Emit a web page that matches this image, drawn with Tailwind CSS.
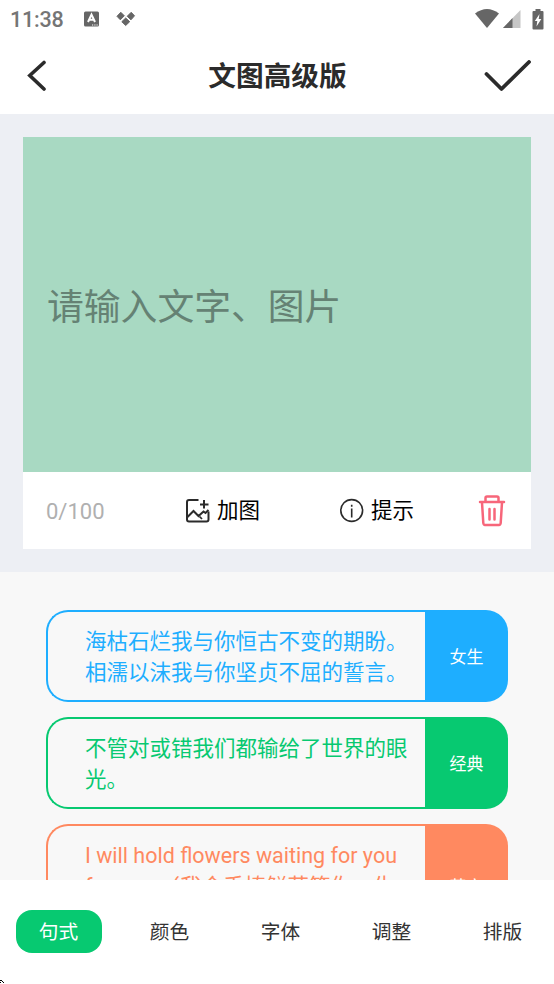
<!DOCTYPE html>
<html lang="zh-CN">
<head>
<meta charset="utf-8">
<title>文图高级版</title>
<script src="https://cdn.jsdelivr.net/npm/@tailwindcss/browser@4"></script>
</head>
<body class="bg-white">
<div class="relative flex h-[984px] w-[554px] flex-col overflow-hidden bg-white font-[Roboto,'Noto_Sans_CJK_SC',sans-serif]">
  <div class="flex h-[38px] shrink-0 items-center pl-[10px] text-[#666]">
    <span class="w-[74px] pt-[2px] text-[21.500px] leading-[38px] font-medium tracking-[-0.200px] text-[#757575]">11:38</span>
    <svg class="h-[16px] w-[15px]" viewBox="0 0 15 16"><rect y=".5" width="15" height="15" rx="1.5" fill="#666"/><path d="M4 11 7.500 3.500 11 11M5.300 8.700h4.400" fill="none" stroke="#fff" stroke-width="2"/><path d="M8 14h1.200M10.300 14h1.200M12.500 14h1.200" stroke="#fff" stroke-width="1.200"/></svg>
    <svg class="ml-[17px] h-[16px] w-[20px]" viewBox="0 0 20 16"><path d="M4.800 1.300 8.300 4.800 4.300 8.800 1 5.300ZM15.200 1.300 18.500 4.800 15 8.800 11.200 5.300ZM9.700 7 13.700 10.700 9.700 14.500 5.800 10.700Z" fill="#666" stroke="#666" stroke-width="1" stroke-linejoin="round"/></svg>
    <svg class="ml-[339px] h-[20px] w-[24px]" viewBox="0 0 24 20"><path d="M0 4.500Q12-4.500 24 4.500L12 19Z" fill="#666"/></svg>
    <svg class="ml-[4px] h-[18px] w-[18px]" viewBox="0 0 18 18"><path d="M17.500 0v18H0Z" fill="#c6c6c6"/><path d="M9.500 8v10H0Z" fill="#666"/></svg>
    <svg class="ml-[11px] h-[21px] w-[12px]" viewBox="0 0 12 21"><path d="M3.500 0h5v2H10.500Q11.500 2 11.500 3V19.500Q11.500 20.500 10.500 20.500h-9Q.5 20.500.5 19.500V3Q.5 2 1.500 2h2Z" fill="#666"/><path d="M7.500 5 2.800 12h2.500L4.500 17.500 9.300 10H6.700Z" fill="#fff"/></svg>
  </div>
  <header class="flex h-[76px] shrink-0 items-center justify-between pr-[23px] pl-[27px]">
    <svg class="h-[32px] w-[45px]" viewBox="0 0 45 32"><path d="M17 2.500 2.800 15.500 17 29" fill="none" stroke="#2b2b2b" stroke-width="3.600" stroke-linecap="round"/></svg>
    <h1 class="pt-[2px] text-[27.700px] leading-[40px] font-bold text-[#2b2b2b]">文图高级版</h1>
    <svg class="h-[32px] w-[48px]" viewBox="0 0 48 32"><path d="M3.500 14 18.500 29 46 2" fill="none" stroke="#2b2b2b" stroke-width="3.800" stroke-linecap="round" stroke-linejoin="round"/></svg>
  </header>
  <section class="h-[458px] shrink-0 bg-[#edeff4] px-[23px] pt-[23px]">
    <div class="flex h-[335px] items-center bg-[#a8d9c2] pt-[6px] pl-[24px] text-[36.800px] text-[#658274]">请输入文字、图片</div>
    <div class="flex h-[77px] items-center bg-white pl-[23px]">
      <span class="w-[139px] pt-[2px] text-[22px] text-[#b0b0b0]">0/100</span>
      <svg class="h-[26px] w-[26px]" viewBox="0 0 26 26"><g fill="none" stroke="#2b2b2b" stroke-width="2"><path d="M13.500 2H4Q2 2 2 4V21.500Q2 23.500 4 23.500H21.500Q23.500 23.500 23.500 21.500V13.500M19 2V10.500M15 6.500h8.500"/><path d="M2.500 19 8.500 13 13.500 18 18.500 13.500 20.500 15 23.500 12"/></g><path d="M14.500 18.500 17 21" fill="none" stroke="#2b2b2b" stroke-width="1.700"/></svg>
      <span class="ml-[6px] w-[122px] pt-[2px] text-[21.500px] text-black">加图</span>
      <svg class="h-[26px] w-[26px]" viewBox="0 0 26 26"><circle cx="12.700" cy="12.500" r="10.900" fill="none" stroke="#2b2b2b" stroke-width="1.600"/><path d="M12.700 10.500v9M12.700 6.700v2" stroke="#2b2b2b" stroke-width="1.600"/></svg>
      <span class="ml-[6px] w-[107px] pt-[2px] text-[21.500px] text-black">提示</span>
      <svg class="h-[32px] w-[28px]" viewBox="0 0 28 32"><g fill="none" stroke="#f7667a" stroke-width="2.500" stroke-linejoin="round" stroke-linecap="round"><path d="M2 7h24M7.500 6.500V3Q7.500 1.500 9 1.500h10Q20.500 1.500 20.500 3V6.500M4 7.500 5.300 28Q5.500 30 7 30h14Q22.500 30 22.700 28L24 7.500M11.500 14v10.500M16.500 14v10.500"/></g></svg>
    </div>
  </section>
  <main class="flex h-[308px] shrink-0 flex-col gap-[15px] overflow-hidden bg-[#f8f8f8] px-[46px] pt-[38px] text-[21.500px] leading-[31px]">
    <div class="flex h-[92px] shrink-0 text-[#1eaeff]">
      <p class="w-[379px] shrink-0 rounded-l-[22px] border-2 border-r-0 border-[#1eaeff] pt-[14px] pl-[37px] whitespace-nowrap">海枯石烂我与你恒古不变的期盼。<br>相濡以沫我与你坚贞不屈的誓言。</p>
      <div class="flex flex-1 items-center justify-center rounded-r-[22px] bg-[#1eaeff] pt-[3px] text-[17px] text-white">女生</div>
    </div>
    <div class="flex h-[92px] shrink-0 text-[#07c971]">
      <p class="w-[379px] shrink-0 rounded-l-[22px] border-2 border-r-0 border-[#07c971] pt-[14px] pl-[37px] whitespace-nowrap">不管对或错我们都输给了世界的眼<br>光。</p>
      <div class="flex flex-1 items-center justify-center rounded-r-[22px] bg-[#07c971] pt-[3px] text-[17px] text-white">经典</div>
    </div>
    <div class="flex h-[123px] shrink-0 text-[#ff8960]">
      <p class="w-[379px] shrink-0 rounded-l-[22px] border-2 border-r-0 border-[#ff8960] pt-[14px] pl-[37px] whitespace-nowrap">I will hold flowers waiting for you<br>forever.<span class="ml-[2px]">（我会手捧鲜花等你一生</span><br>一世）</p>
      <div class="flex flex-1 items-center justify-center rounded-r-[22px] bg-[#ff8960] pt-[3px] text-[17px] text-white">英文</div>
    </div>
  </main>
  <nav class="grid h-[104px] shrink-0 grid-cols-[repeat(5,111px)] justify-items-center pt-[30px] pl-[3px] text-[19.700px] text-[#333]">
    <span class="flex h-[43px] w-[86px] items-center justify-center rounded-[16px] bg-[#07c971] pt-[3px] text-white">句式</span>
    <span class="flex h-[43px] items-center pt-[3px]">颜色</span>
    <span class="flex h-[43px] items-center pt-[3px]">字体</span>
    <span class="flex h-[43px] items-center pt-[3px]">调整</span>
    <span class="flex h-[43px] items-center pt-[3px]">排版</span>
  </nav>
  <svg class="absolute bottom-0 left-0 h-[5px] w-[5px]" viewBox="0 0 5 5" shape-rendering="crispEdges"><path d="M0 1h1v1H0ZM1 1h1v1H1ZM2 2h1v1H2ZM3 3h1v1H3ZM0 3h1v1H0Z" fill="#000"/></svg>
</div>
</body>
</html>
